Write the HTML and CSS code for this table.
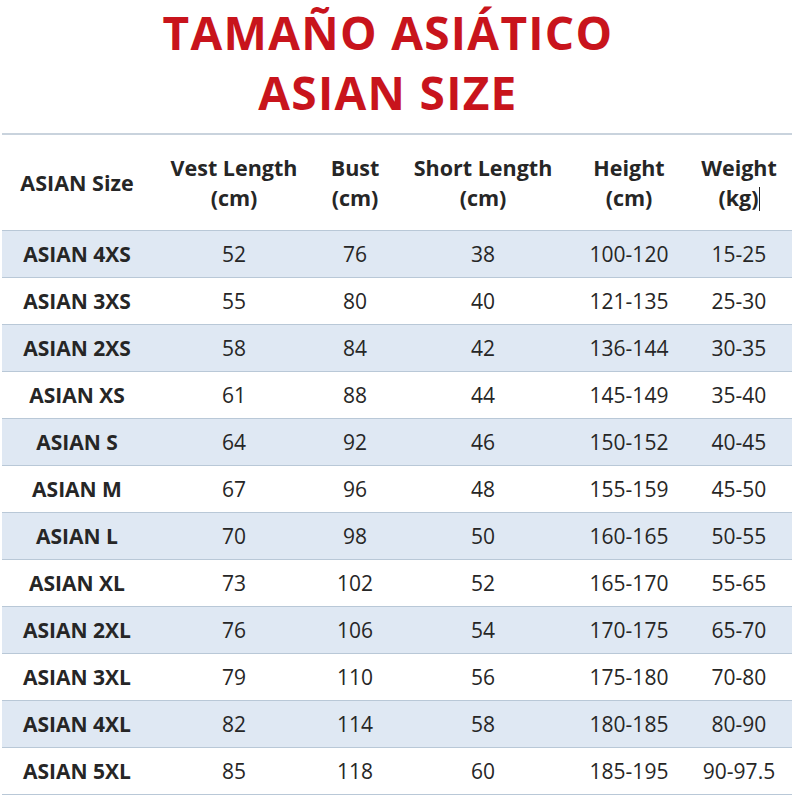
FILE: index.html
```html
<!DOCTYPE html>
<html>
<head>
<meta charset="utf-8">
<link rel="stylesheet" href="styles.css">
</head>
<body>
<div class="page">
  <h1 class="title"><span>TAMAÑO ASIÁTICO</span><span>ASIAN SIZE</span></h1>
  <table class="chart">
    <colgroup>
      <col class="c1"><col class="c2"><col class="c3"><col class="c4"><col class="c5"><col class="c6">
    </colgroup>
    <thead>
      <tr><th>ASIAN Size</th><th>Vest Length<br>(cm)</th><th>Bust<br>(cm)</th><th>Short Length<br>(cm)</th><th>Height<br>(cm)</th><th>Weight<br>(kg)<span class="caret"></span></th></tr>
    </thead>
    <tbody>
      <tr><td>ASIAN 4XS</td><td>52</td><td>76</td><td>38</td><td>100-120</td><td>15-25</td></tr>
      <tr><td>ASIAN 3XS</td><td>55</td><td>80</td><td>40</td><td>121-135</td><td>25-30</td></tr>
      <tr><td>ASIAN 2XS</td><td>58</td><td>84</td><td>42</td><td>136-144</td><td>30-35</td></tr>
      <tr><td>ASIAN XS</td><td>61</td><td>88</td><td>44</td><td>145-149</td><td>35-40</td></tr>
      <tr><td>ASIAN S</td><td>64</td><td>92</td><td>46</td><td>150-152</td><td>40-45</td></tr>
      <tr><td>ASIAN M</td><td>67</td><td>96</td><td>48</td><td>155-159</td><td>45-50</td></tr>
      <tr><td>ASIAN L</td><td>70</td><td>98</td><td>50</td><td>160-165</td><td>50-55</td></tr>
      <tr><td>ASIAN XL</td><td>73</td><td>102</td><td>52</td><td>165-170</td><td>55-65</td></tr>
      <tr><td>ASIAN 2XL</td><td>76</td><td>106</td><td>54</td><td>170-175</td><td>65-70</td></tr>
      <tr><td>ASIAN 3XL</td><td>79</td><td>110</td><td>56</td><td>175-180</td><td>70-80</td></tr>
      <tr><td>ASIAN 4XL</td><td>82</td><td>114</td><td>58</td><td>180-185</td><td>80-90</td></tr>
      <tr><td>ASIAN 5XL</td><td>85</td><td>118</td><td>60</td><td>185-195</td><td>90-97.5</td></tr>
    </tbody>
  </table>
</div>
</body>
</html>
```
FILE: styles.css
```css
html, body {
  margin: 0;
  padding: 0;
  background: #ffffff;
}
.page {
  width: 800px;
  height: 800px;
  overflow: hidden;
  font-family: "Open Sans", "Liberation Sans", sans-serif;
  color: #262626;
}
.title {
  margin: 0;
  padding-top: 2px;
  padding-right: 24px;
  height: 127px;
  box-sizing: border-box;
  display: flex;
  flex-direction: column;
  align-items: center;
  color: #c8141c;
  font-family: "Open Sans", sans-serif;
  font-weight: 700;
  font-size: 46px;
  line-height: 60px;
  letter-spacing: 1.3px;
}
.chart {
  margin-left: 2px;
  margin-top: 6px;
  width: 790px;
  border-collapse: collapse;
  table-layout: fixed;
}
.c1 { width: 150px; }
.c2 { width: 164px; }
.c3 { width: 78px; }
.c4 { width: 178px; }
.c5 { width: 114px; }
.c6 { width: 106px; }
.chart th {
  height: 95px;
  font-size: 21.5px;
  font-weight: 700;
  line-height: 30px;
  text-align: center;
  vertical-align: middle;
  border-top: 2px solid #c9d3dd;
  border-bottom: 1px solid #b9c8d7;
  padding: 0;
}
.chart td {
  height: 46px;
  padding: 0;
  font-size: 21px;
  text-align: center;
  vertical-align: middle;
  border-bottom: 1px solid #b9c8d7;
}
.chart td:first-child {
  font-weight: 700;
}
.chart tbody tr:nth-child(odd) td {
  background: #dfe8f3;
}
.caret {
  display: inline-block;
  width: 1px;
  height: 24px;
  background: #222;
  vertical-align: -5px;
}
```
